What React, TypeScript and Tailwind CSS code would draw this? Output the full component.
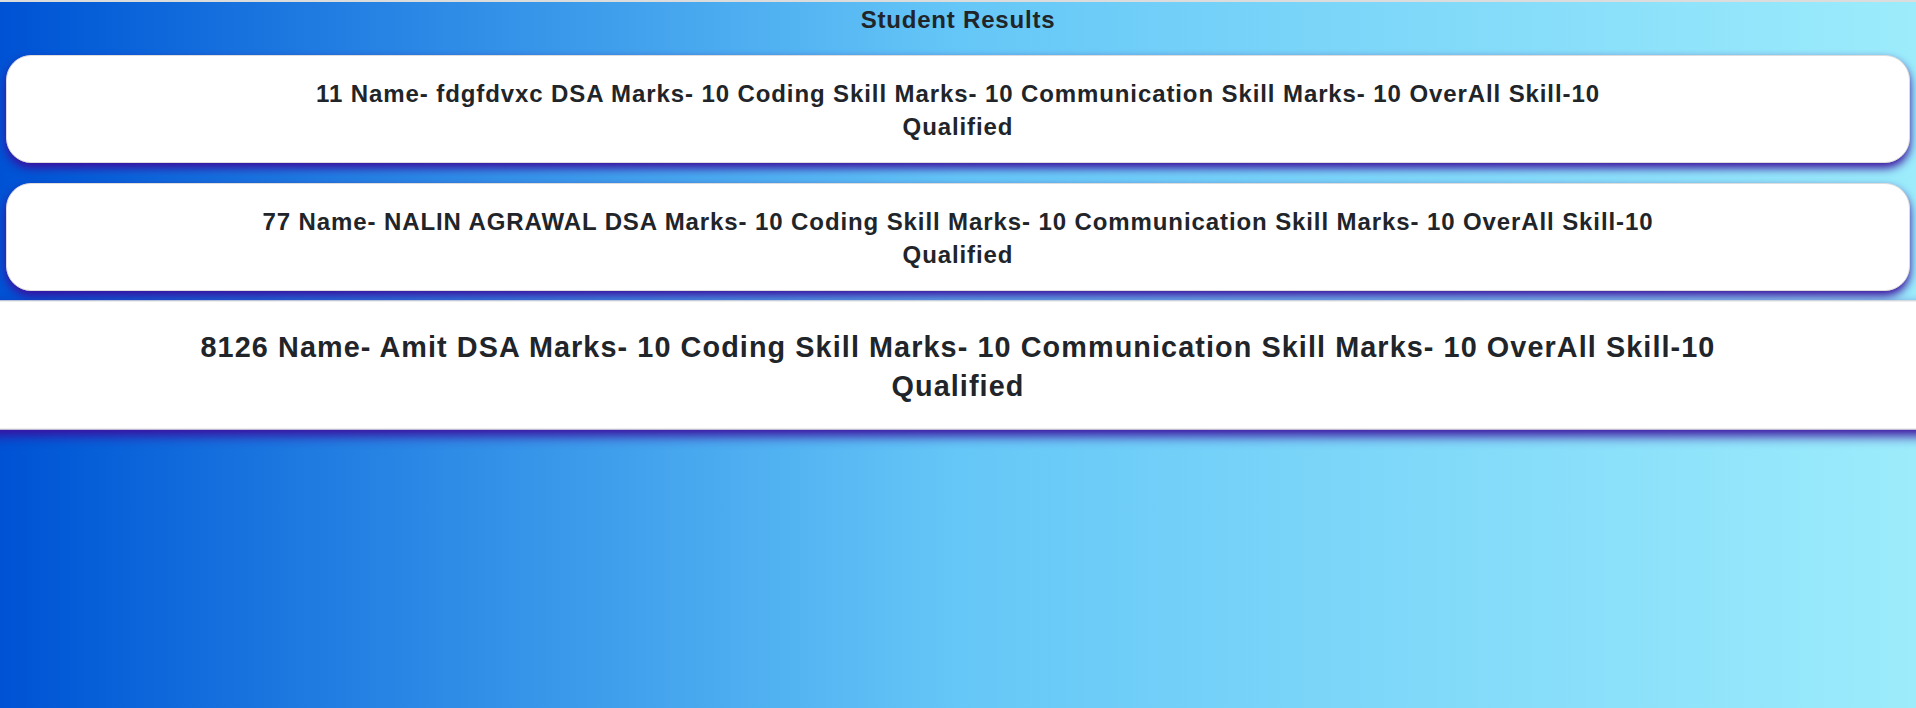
const results = [
  { id: 11, name: "fdgfdvxc", dsa: 10, coding: 10, comm: 10, overall: 10, status: "Qualified" },
  { id: 77, name: "NALIN AGRAWAL", dsa: 10, coding: 10, comm: 10, overall: 10, status: "Qualified" },
  { id: 8126, name: "Amit", dsa: 10, coding: 10, comm: 10, overall: 10, status: "Qualified" },
];

const App = () => {
  return (
    <div
      className="min-h-screen overflow-hidden border-t-2 border-[#dcdcdc] bg-linear-to-r from-[#0052d4] via-[#65c7f7] to-[#9cecfb] text-[#212529]"
      style={{ fontFamily: '"Liberation Sans", Arial, sans-serif' }}
    >
      <h1 className="pt-[4px] text-center text-[24px] leading-[28px] font-bold tracking-[0.8px]">
        Student Results
      </h1>
      <div className="mt-[21px] flex flex-col gap-5">
        {results.map((r, i) => (
          <div
            key={r.id}
            className={
              i === 2
                ? "mx-[6px] scale-[1.2] rounded-[25px] border border-[#dddddd] bg-white pt-[21px] pb-[19px] text-center shadow-[0_5px_10px_#3b0f9e]"
                : "mx-[6px] rounded-[25px] border border-[#dddddd] bg-white pt-[21px] pb-[19px] text-center shadow-[0_5px_10px_#3b0f9e]"
            }
          >
            <p className="text-[24px] leading-[33px] font-bold tracking-[0.9px]">
              {r.id} Name- {r.name} DSA Marks- {r.dsa} Coding Skill Marks- {r.coding} Communication Skill
              Marks- {r.comm} OverAll Skill-{r.overall}
            </p>
            <p className="text-[24px] leading-[33px] font-bold tracking-[0.9px]">{r.status}</p>
          </div>
        ))}
      </div>
    </div>
  );
};

export default App;
